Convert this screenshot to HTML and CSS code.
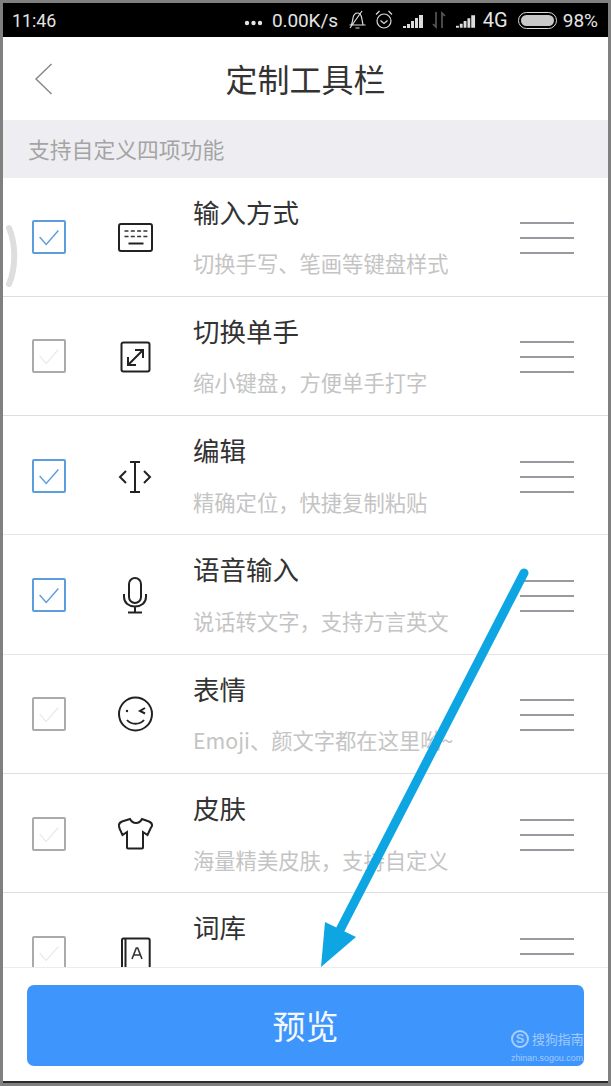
FILE: index.html
```html
<!DOCTYPE html>
<html lang="zh-CN">
<head>
<meta charset="utf-8">
<title>定制工具栏</title>
<link rel="stylesheet" href="styles.css">
</head>
<body>
<div class="app">
  <div class="status">
    <span class="time">11:46</span>
    <div class="status-right">
      <svg class="s-dots" width="19" height="6" viewBox="0 0 19 6"><circle cx="3" cy="3" r="2.2"/><circle cx="9.5" cy="3" r="2.2"/><circle cx="16" cy="3" r="2.2"/></svg>
      <span class="net">0.00K/s</span>
      <svg class="s-ico s-bell" width="17" height="20" viewBox="0 0 17 20"><path d="M2 15c1.500-2 1.500-4 2-7s2.500-5 4.500-5 3.500 2 4 4l1.500 8z M.5 15h16 M6.500 18h4 M1 18 13 1"/></svg>
      <svg class="s-ico s-alarm" width="18" height="20" viewBox="0 0 18 20"><circle cx="9" cy="11" r="7"/><path d="M5.500 10.500l3.500 3 3.500-3 M1 4.500l3.500-3.500 M17 4.500l-3.500-3.500"/></svg>
      <svg class="s-sig s-sig-a" width="21" height="14" viewBox="0 0 21 14"><path d="M0 12h3v2H0zM4 10h3v4H4zM8 7h3v7H8zM12 4h3v10h-3zM16 1h4v13h-4z"/></svg>
      <svg class="s-arrows" width="14" height="18" viewBox="0 0 14 18"><path d="M4 1v15L1 13M10 17V2l3 3"/></svg>
      <svg class="s-sig s-sig-b" width="20" height="14" viewBox="0 0 21 14"><path d="M0 12h3v2H0zM4 10h3v4H4zM8 7h3v7H8zM12 4h3v10h-3zM16 1h4v13h-4z"/></svg>
      <span class="net-type">4G</span>
      <span class="battery"><span class="battery-fill"></span></span>
      <span class="pct">98%</span>
    </div>
  </div>

  <header class="header">
    <svg class="back" width="19" height="32" viewBox="0 0 19 32"><path d="M17.500 1 2 16l15.500 15"/></svg>
    <h1 class="title">定制工具栏</h1>
  </header>

  <div class="section">支持自定义四项功能</div>

  <div class="list">
    <div class="row">
      <span class="check on"><svg width="32" height="32" viewBox="0 0 32 32"><path d="M6 16l7 8 13-15"/></svg></span>
      <svg class="icon" width="54" height="54" viewBox="0 0 54 54"><rect x="11" y="14" width="33" height="27" rx="2"/><path class="thin" d="M16.500 21h23M16.500 26.500h23" stroke-dasharray="4 2.300"/><path d="M20.500 33.500h15"/></svg>
      <div class="text"><div class="name">输入方式</div><div class="desc">切换手写、笔画等键盘样式</div></div>
      <div class="handle"><i></i><i></i><i></i></div>
    </div>
    <div class="row">
      <span class="check"><svg width="32" height="32" viewBox="0 0 32 32"><path d="M6 16l7 8 13-15"/></svg></span>
      <svg class="icon" width="54" height="54" viewBox="0 0 54 54"><rect x="13.500" y="13.500" width="28" height="29" rx="2"/><path d="M20 36l15-15M27 21h8v8M20 28v8h8"/></svg>
      <div class="text"><div class="name">切换单手</div><div class="desc">缩小键盘，方便单手打字</div></div>
      <div class="handle"><i></i><i></i><i></i></div>
    </div>
    <div class="row">
      <span class="check on"><svg width="32" height="32" viewBox="0 0 32 32"><path d="M6 16l7 8 13-15"/></svg></span>
      <svg class="icon" width="54" height="54" viewBox="0 0 54 54"><path d="M27 13v30M22 13h10M22 43h10M18 22l-6 6 6 6M36 22l6 6-6 6"/></svg>
      <div class="text"><div class="name">编辑</div><div class="desc">精确定位，快捷复制粘贴</div></div>
      <div class="handle"><i></i><i></i><i></i></div>
    </div>
    <div class="row">
      <span class="check on"><svg width="32" height="32" viewBox="0 0 32 32"><path d="M6 16l7 8 13-15"/></svg></span>
      <svg class="icon" width="54" height="54" viewBox="0 0 54 54"><rect x="21" y="10" width="12" height="25" rx="6"/><path d="M16 26v3c0 6 5 9.500 11 9.500s11-3.500 11-9.500v-3M27 38.500V44M20 44.500h14"/></svg>
      <div class="text"><div class="name">语音输入</div><div class="desc">说话转文字，支持方言英文</div></div>
      <div class="handle"><i></i><i></i><i></i></div>
    </div>
    <div class="row">
      <span class="check"><svg width="32" height="32" viewBox="0 0 32 32"><path d="M6 16l7 8 13-15"/></svg></span>
      <svg class="icon" width="54" height="54" viewBox="0 0 54 54"><circle cx="27.500" cy="27" r="16.500"/><circle class="dot" cx="19" cy="24" r="1.200"/><path d="M37 21l-5 3 5 2.500M19 33c4 5 13 5 17 0"/></svg>
      <div class="text"><div class="name">表情</div><div class="desc">Emoji、颜文字都在这里呦~</div></div>
      <div class="handle"><i></i><i></i><i></i></div>
    </div>
    <div class="row">
      <span class="check"><svg width="32" height="32" viewBox="0 0 32 32"><path d="M6 16l7 8 13-15"/></svg></span>
      <svg class="icon" width="54" height="54" viewBox="0 0 54 54"><path d="M22 12c1.500 2.800 3.500 4 6 4s4.500-1.200 6-4l7 2.500c2 .8 3.300 2.500 3 4.500l-1.500 2.500-3 6.500-4.500-3v15.500c0 .6-.4 1-1 1H20c-.6 0-1-.4-1-1V25l-4.500 3-3-6.500L11 19c-.3-2 1-3.700 3-4.500z"/></svg>
      <div class="text"><div class="name">皮肤</div><div class="desc">海量精美皮肤，支持自定义</div></div>
      <div class="handle"><i></i><i></i><i></i></div>
    </div>
    <div class="row">
      <span class="check"><svg width="32" height="32" viewBox="0 0 32 32"><path d="M6 16l7 8 13-15"/></svg></span>
      <svg class="icon" width="54" height="54" viewBox="0 0 54 54"><path d="M14 50V14c0-1 .5-1.500 1.500-1.500H40c1 0 1.700.7 1.700 1.700V50M17.500 12.500V50"/><path class="thin" d="M24 33l4.300-11h1.400L34 33M25.700 29h6.600"/></svg>
      <div class="text"><div class="name">词库</div></div>
      <div class="handle"><i></i><i></i><i></i></div>
    </div>
  </div>

  <footer class="footer">
    <div class="button">预览
      <div class="mark">
        <div class="mark-top"><span class="mark-s">S</span><span class="mark-name">搜狗指南</span></div>
        <div class="mark-url">zhinan.sogou.com</div>
      </div>
    </div>
  </footer>
</div>

<svg class="bump" width="16" height="64" viewBox="0 0 16 64"><path d="M4 4c7 16 7 40 0 56"/></svg>
<svg class="arrow" width="611" height="1086" viewBox="0 0 611 1086"><path class="arrow-line" d="M524 573 340 930"/><path class="arrow-head" d="M321 967 325 922 356 937z"/></svg>
</body>
</html>
```

FILE: styles.css
```css
* { box-sizing: border-box; }
html, body { margin: 0; padding: 0; }
body {
  width: 611px;
  height: 1086px;
  overflow: hidden;
  background: #808080;
  font-family: "Noto Sans CJK SC", "Noto Sans", sans-serif;
  position: relative;
}
.app {
  margin: 3px 3px 0;
  height: 1080px;
  display: flex;
  flex-direction: column;
  background: #fff;
  border-bottom: 2px solid #2b2b2b;
}
.status {
  height: 34px;
  flex: none;
  background: #000;
  color: #e4e4e4;
  display: flex;
  align-items: center;
  justify-content: space-between;
  padding: 0 10px 0 9px;
  font-family: Roboto, "Liberation Sans", sans-serif;
  font-size: 18px;
}
.status-right { display: flex; align-items: center; }
.time { font-size: 17.800px; }
.s-dots { fill: #e4e4e4; margin-right: 9px; margin-top: 6px; }
.net { font-size: 19px; margin-right: 11px; letter-spacing: -0.100px; }
.s-ico { fill: none; stroke: #dcdcdc; stroke-width: 1.200; }
.s-bell { margin-right: 9px; }
.s-alarm { margin-right: 10px; }
.s-sig { fill: #dcdcdc; margin-top: 2px; }
.s-sig-a { margin-right: 8px; }
.s-sig-b { margin-right: 7px; }
.s-arrows { fill: none; stroke: #5a5a5a; stroke-width: 1.600; margin-right: 10px; }
.net-type { margin-right: 10px; font-size: 20px; }
.battery {
  width: 39px;
  height: 17px;
  border: 1.500px solid #ddd;
  border-radius: 9px;
  padding: 2px;
  margin-right: 6px;
  display: flex;
}
.battery-fill { flex: 1; background: #c8c8c8; border-radius: 6px; }
.pct { font-size: 19px; }

.header {
  height: 83px;
  flex: none;
  display: flex;
  align-items: center;
  justify-content: center;
  position: relative;
}
.back {
  position: absolute;
  left: 31px;
  top: 26px;
  fill: none;
  stroke: #8a8a8a;
  stroke-width: 1.500;
}
.title {
  margin: 0;
  font-size: 32px;
  font-weight: 400;
  color: #333;
  line-height: 1;
  padding-bottom: 2px;
}
.section {
  height: 57.500px;
  flex: none;
  background: #eeeef2;
  color: #a4a4a4;
  font-size: 21.800px;
  line-height: 58px;
  padding-left: 25px;
}
.list { flex: 1; min-height: 0; overflow: hidden; }
.row {
  height: 119.330px;
  padding-top: 1px;
  display: flex;
  align-items: center;
  border-bottom: 1px solid #dedede;
}
.row:nth-child(4), .row:nth-child(3) { border-bottom-color: #e6e6e6; }
.check {
  flex: none;
  width: 34px;
  height: 34px;
  margin-left: 29px;
  border: 2px solid #aaa;
  border-radius: 2px;
  display: flex;
  align-items: center;
  justify-content: center;
}
.check svg { fill: none; stroke: #ececec; stroke-width: 1.500; }
.check.on { border-color: #5b9dde; }
.check.on svg { stroke: #5b9dde; }
.icon {
  flex: none;
  margin-left: 42px;
  fill: none;
  stroke: #222;
  stroke-width: 2;
}
.icon .thin { stroke-width: 1.600; stroke: #333; }
.icon .dot { fill: #222; stroke: none; }
.text { flex: 1; margin-left: 31px; align-self: flex-start; }
.name {
  font-size: 26.500px;
  color: #333;
  line-height: 36px;
  margin-top: 15px;
}
.desc {
  font-size: 21.300px;
  color: #c4c4c4;
  line-height: 30px;
  margin-top: 18.500px;
  white-space: nowrap;
}
.handle {
  flex: none;
  width: 54px;
  margin-right: 34px;
  display: flex;
  flex-direction: column;
  gap: 13px;
  padding-top: 2px;
}
.handle i { display: block; height: 2px; background: #999aa0; }

.footer {
  height: 114px;
  flex: none;
  background: #fff;
  border-top: 1px solid #ececec;
  padding: 17px 24px 0;
  position: relative;
}
.button {
  height: 81px;
  background: #3e95fb;
  border-radius: 7px;
  color: #f4f9ff;
  font-size: 33px;
  line-height: 81px;
  text-align: center;
  position: relative;
  overflow: hidden;
}
.mark {
  position: absolute;
  left: 484px;
  top: 45px;
  width: 73px;
  color: rgba(255, 255, 255, 0.5);
  text-align: left;
  line-height: 1;
}
.mark-top { display: flex; align-items: center; gap: 3px; }
.mark-name { font-size: 12.900px; white-space: nowrap; }
.mark-s {
  width: 18px;
  height: 18px;
  flex: none;
  border: 2px solid rgba(255, 255, 255, 0.55);
  border-radius: 50%;
  font: 700 13px/14px "Liberation Sans", sans-serif;
  text-align: center;
}
.mark-url {
  font: 8.900px/1 "Liberation Sans", sans-serif;
  margin-top: 6px;
  white-space: nowrap;
}
.bump {
  position: absolute;
  left: 5px;
  top: 224px;
  fill: none;
  stroke: #dedede;
  stroke-width: 6;
  stroke-linecap: round;
}
.arrow { position: absolute; left: 0; top: 0; pointer-events: none; }
.arrow-line { fill: none; stroke: #0ea5e3; stroke-width: 9; stroke-linecap: round; }
.arrow-head { fill: #0ea5e3; }
```
